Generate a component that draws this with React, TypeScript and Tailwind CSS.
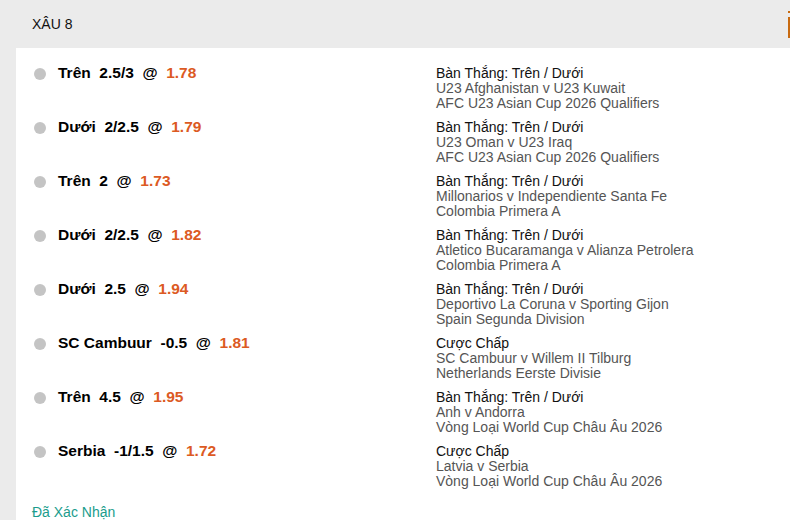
import React from 'react';

type Leg = {
    pick: string;
    line: string;
    odds: string;
    market: string;
    match: string;
    league: string;
};

const legs: Leg[] = [
    { pick: 'Trên', line: '2.5/3', odds: '1.78', market: 'Bàn Thắng: Trên / Dưới', match: 'U23 Afghanistan v U23 Kuwait', league: 'AFC U23 Asian Cup 2026 Qualifiers' },
    { pick: 'Dưới', line: '2/2.5', odds: '1.79', market: 'Bàn Thắng: Trên / Dưới', match: 'U23 Oman v U23 Iraq', league: 'AFC U23 Asian Cup 2026 Qualifiers' },
    { pick: 'Trên', line: '2', odds: '1.73', market: 'Bàn Thắng: Trên / Dưới', match: 'Millonarios v Independiente Santa Fe', league: 'Colombia Primera A' },
    { pick: 'Dưới', line: '2/2.5', odds: '1.82', market: 'Bàn Thắng: Trên / Dưới', match: 'Atletico Bucaramanga v Alianza Petrolera', league: 'Colombia Primera A' },
    { pick: 'Dưới', line: '2.5', odds: '1.94', market: 'Bàn Thắng: Trên / Dưới', match: 'Deportivo La Coruna v Sporting Gijon', league: 'Spain Segunda Division' },
    { pick: 'SC Cambuur', line: '-0.5', odds: '1.81', market: 'Cược Chấp', match: 'SC Cambuur v Willem II Tilburg', league: 'Netherlands Eerste Divisie' },
    { pick: 'Trên', line: '4.5', odds: '1.95', market: 'Bàn Thắng: Trên / Dưới', match: 'Anh v Andorra', league: 'Vòng Loại World Cup Châu Âu 2026' },
    { pick: 'Serbia', line: '-1/1.5', odds: '1.72', market: 'Cược Chấp', match: 'Latvia v Serbia', league: 'Vòng Loại World Cup Châu Âu 2026' },
];

const LegRow: React.FC<{ leg: Leg }> = ({ leg }) => (
    <div className="flex mb-[9px]">
        <div className="w-[420px] flex items-start pl-[18px]">
            <span className="mt-[2px] w-[12px] h-[12px] rounded-full bg-[#c4c4c4] shrink-0" />
            <span className="ml-[12px] -mt-[1px] font-bold text-[15.5px] leading-[15px] text-black whitespace-pre">
                {leg.pick}  {leg.line}  @  <span className="text-[#dc5a23]">{leg.odds}</span>
            </span>
        </div>
        <div className="flex flex-col text-[14px] leading-[15px]">
            <span className="text-[#111]">{leg.market}</span>
            <span className="text-[#555]">{leg.match}</span>
            <span className="text-[#555]">{leg.league}</span>
        </div>
    </div>
);

const App: React.FC = () => {
    return (
        <div className="w-[790px] h-[520px] overflow-hidden bg-[#ebebeb] font-['Liberation_Sans',Arial,sans-serif]">
            <div className="h-[48px] flex items-center justify-between pl-[32px]">
                <span className="text-[14px] text-[#111]">XÂU 8</span>
                <div className="self-start mt-[11px] flex flex-col items-end">
                    <span className="w-[2px] h-[2px] bg-[#c86a10]" />
                    <span className="mt-[4px] w-[2px] h-[21px] bg-[#c86a10]" />
                </div>
            </div>
            <div className="ml-[16px] bg-white h-[472px] pt-[18px]">
                {legs.map((leg, i) => (
                    <LegRow key={i} leg={leg} />
                ))}
                <div className="mt-[16px] pl-[16px] text-[14px] leading-[15px] text-[#1a9c8c]">Đã Xác Nhận</div>
            </div>
        </div>
    );
};

export default App;
